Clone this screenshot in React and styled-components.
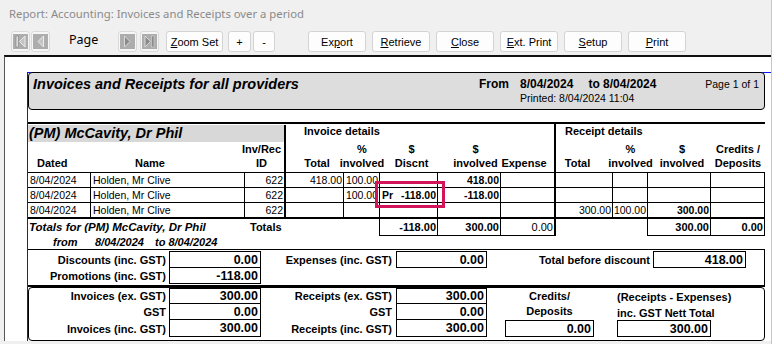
import styled, { createGlobalStyle } from "styled-components";

const COLS = "63px 154px 41px 58px 36px 58px 63px 55px 57px 35px 63px 54px";

const GlobalStyle = createGlobalStyle`
  html, body { margin: 0; padding: 0; background: #f0f0f0; }
  *, *::before, *::after { box-sizing: border-box; }
`;

const Window = styled.div`
  width: 772px;
  height: 344px;
  overflow: hidden;
  background: #f0f0f0;
  border-right: 1px solid #c6c6c6;
  font-family: "Liberation Sans", Arial, sans-serif;
  color: #000;
`;

const TitleBar = styled.div`
  height: 26px;
  padding-left: 9px;
  display: flex;
  align-items: center;
  font-family: "Noto Sans", "Liberation Sans", sans-serif;
  font-size: 11.3px;
  color: #8a8a8a;
  white-space: nowrap;
`;

const Toolbar = styled.div`
  height: 29px;
  padding: 5px 0 0 11px;
  display: flex;
  align-items: flex-start;
`;

const NavButton = styled.div`
  width: 19px;
  height: 21px;
  margin-left: ${(p) => p.$ml || 0}px;
  border: 1px solid #dadada;
  border-radius: 3px;
  background: #f6f6f6;
  display: flex;
  align-items: center;
  justify-content: center;
`;

const PageLabel = styled.div`
  width: 29px;
  margin-left: 19px;
  height: 21px;
  line-height: 18px;
  font-family: "Noto Sans", sans-serif;
  font-size: 12.5px;
  white-space: nowrap;
`;

const ToolButton = styled.button`
  width: ${(p) => p.$w || 58}px;
  height: 21px;
  margin-left: ${(p) => p.$ml || 0}px;
  padding: 0;
  border: 1px solid #d3d3d3;
  border-radius: 3px;
  background: #fdfdfd;
  font-family: "Liberation Sans", Arial, sans-serif;
  font-size: 11px;
  color: #000;
  white-space: nowrap;
`;

const Viewport = styled.div`
  margin-left: 4px;
  height: 286px;
  background: #fff;
  border-top: 2px solid #111;
  border-left: 1px solid #555;
  overflow: hidden;
`;

const Page = styled.div`
  margin: 15px 0 0 22px;
  width: 780px;
  border-left: 1px solid #0a14ff;
  border-top: 1px solid #0a14ff;
`;

const Report = styled.div`
  width: 737px;
`;

const Banner = styled.div`
  position: relative;
  margin-top: -1px;
  height: 38px;
  display: flex;
  padding: 4px 5px 0 4px;
  background: #dddddd;
  border: 1px solid #000;
  border-radius: 4px;
`;

const BannerTitle = styled.div`
  width: 446px;
  font-size: 14.5px;
  font-weight: bold;
  font-style: italic;
  line-height: 14px;
  white-space: nowrap;
`;

const FromLabel = styled.div`
  width: 41px;
  font-size: 12px;
  font-weight: bold;
  line-height: 14px;
`;

const DateBlock = styled.div`
  display: flex;
  flex-direction: column;
`;

const DateLine = styled.div`
  display: flex;
  gap: 15px;
  font-size: 12px;
  font-weight: bold;
  line-height: 14px;
  white-space: nowrap;
`;

const SmallText = styled.div`
  font-size: 10.5px;
  line-height: 14px;
  white-space: nowrap;
  margin-left: ${(p) => (p.$right ? "auto" : "0")};
`;

const ProviderBlock = styled.div`
  margin-top: 12px;
  border-top: 2px solid #000;
`;

const GridRow = styled.div`
  display: grid;
  grid-template-columns: ${COLS};
  height: ${(p) => p.$h}px;
  border-top: ${(p) => p.$top || 0}px solid #000;
`;

const ProviderName = styled.div`
  grid-column: 1 / 4;
  margin-top: 1px;
  padding-left: 1px;
  background: #d8d8d8;
  border-right: 2px solid #000;
  font-size: 14.5px;
  font-weight: bold;
  font-style: italic;
  line-height: 17px;
  white-space: nowrap;
`;

const GroupLabel = styled.div`
  grid-column: ${(p) => p.$span};
  padding-left: ${(p) => p.$pl}px;
  border-right: ${(p) => (p.$thick ? 2 : 0)}px solid #000;
  font-size: 11px;
  font-weight: bold;
  line-height: 14px;
  white-space: nowrap;
`;

const HeadCell = styled.div`
  display: flex;
  flex-direction: column;
  justify-content: flex-end;
  align-items: ${(p) => (p.$left ? "flex-start" : "center")};
  padding: 0 ${(p) => p.$pr || 0}px 2px ${(p) => p.$pl || 0}px;
  border-right: ${(p) => (p.$thick ? 2 : 0)}px solid #000;
  font-size: 11px;
  font-weight: bold;
  line-height: 14px;
  white-space: nowrap;
`;

const DataCell = styled.div`
  position: relative;
  display: flex;
  justify-content: ${(p) => (p.$split ? "space-between" : p.$left ? "flex-start" : "flex-end")};
  padding: 0 1px 0 ${(p) => (p.$left || p.$split ? 2 : 1)}px;
  border-right: ${(p) => (p.$thick ? 2 : 1)}px solid #000;
  font-size: 10.5px;
  font-weight: ${(p) => (p.$bold ? "bold" : "normal")};
  line-height: 14px;
  white-space: nowrap;
`;

const Highlight = styled.div`
  position: absolute;
  left: -5px;
  top: -7px;
  width: 70px;
  height: 27px;
  border: 3px solid #d4145a;
  z-index: 3;
  pointer-events: none;
`;

const TotalCell = styled.div`
  grid-column: ${(p) => p.$span || "auto"};
  display: flex;
  justify-content: flex-end;
  padding: 0 1px 0 ${(p) => p.$pl || 0}px;
  border-right: ${(p) => p.$edge || 0}px solid #000;
  border-bottom: ${(p) => (p.$boxed ? 1 : 0)}px solid #000;
  font-size: 11px;
  font-weight: ${(p) => (p.$regular ? "normal" : "bold")};
  line-height: 16px;
  white-space: nowrap;
`;

const TotalsTitle = styled.div`
  grid-column: 1 / 3;
  padding-left: 1px;
  font-size: 11.5px;
  font-weight: bold;
  font-style: italic;
  line-height: 16px;
  white-space: nowrap;
`;

const TotalsWord = styled.div`
  padding-left: 5px;
  font-size: 11px;
  font-weight: bold;
  line-height: 16px;
`;

const FromRow = styled.div`
  height: 13px;
  display: flex;
  padding-left: 25px;
  font-size: 11px;
  font-weight: bold;
  font-style: italic;
  line-height: 13px;
  white-space: nowrap;
`;

const FromPart = styled.span`
  width: ${(p) => (p.$w ? `${p.$w}px` : "auto")};
`;

const SummaryTop = styled.div`
  display: grid;
  grid-template-columns: 141px 92px 135px 91px 166px 93px;
  grid-template-rows: 17px 16px;
  height: 38px;
  padding-top: 1px;
  border-top: 1px solid #000;
  border-right: 1px solid #000;
  border-bottom: 2px solid #000;
`;

const SummaryBottom = styled.div`
  display: grid;
  grid-template-columns: 140px 92px 135px 91px 18px 89px 23px 94px;
  grid-template-rows: 16px 16px 17px;
  height: 54px;
  border: 1px solid #000;
  border-radius: 4px;
`;

const SumLabel = styled.div`
  grid-column: ${(p) => p.$col || "auto"};
  grid-row: ${(p) => p.$row || "auto"};
  display: flex;
  align-items: center;
  justify-content: flex-end;
  padding-right: ${(p) => p.$pr || 3}px;
  font-size: 11px;
  font-weight: bold;
  white-space: nowrap;
`;

const SumValue = styled.div`
  grid-column: ${(p) => p.$col || "auto"};
  grid-row: ${(p) => p.$row || "auto"};
  display: flex;
  align-items: center;
  justify-content: flex-end;
  padding-right: 2px;
  border: 1px solid #000;
  border-top-width: ${(p) => (p.$stacked ? 0 : 1)}px;
  font-size: 12.5px;
  font-weight: bold;
  white-space: nowrap;
`;

const NoteLabel = styled.div`
  grid-column: ${(p) => p.$col};
  grid-row: 1 / 3;
  display: flex;
  flex-direction: column;
  align-items: ${(p) => (p.$left ? "flex-start" : "center")};
  padding-top: 1px;
  font-size: 11px;
  font-weight: bold;
  line-height: ${(p) => (p.$left ? 16 : 15)}px;
  white-space: nowrap;
`;

const NavIcon = ({ dir, end }) => (
  <svg width="15" height="15" viewBox="0 0 15 15">
    <rect width="15" height="15" fill="#adadad" />
    {dir === "left" ? (
      <>
        {end && <rect x="3" y="2" width="2.5" height="11" fill="#dcdcdc" stroke="#7f7f7f" strokeWidth="0.6" />}
        <path d={end ? "M12 2 L6.5 7.5 L12 13 Z" : "M10.5 2 L5 7.5 L10.5 13 Z"} fill="#c4c4c4" stroke="#ececec" strokeWidth="1" />
      </>
    ) : (
      <>
        <path d={end ? "M3 2 L8.5 7.5 L3 13 Z" : "M4.5 2 L10 7.5 L4.5 13 Z"} fill="#8a8a8a" stroke="#d8d8d8" strokeWidth="1" />
        {end && <rect x="9.5" y="2" width="2.5" height="11" fill="#8a8a8a" stroke="#d8d8d8" strokeWidth="0.6" />}
      </>
    )}
  </svg>
);

const heads = [
  { b: "Dated", left: true, pl: 9 },
  { b: "Name", left: true, pl: 44 },
  { a: "Inv/Rec", b: "ID", pr: 6, thick: true },
  { b: "Total", pl: 4 },
  { a: "%", b: "involved" },
  { a: "$", b: "Discnt", pl: 5 },
  { a: "$", b: "involved", pl: 12 },
  { b: "Expense", pr: 7, thick: true },
  { b: "Total", pr: 14 },
  { a: "%", b: "involved" },
  { a: "$", b: "involved", pl: 5 },
  { a: "Credits /", b: "Deposits" },
];

const rows = [
  { total: "418.00", pct: "100.00", disc: "", inv: "418.00", rtotal: "", rpct: "", rinv: "" },
  { total: "", pct: "100.00", disc: "-118.00", inv: "-118.00", rtotal: "", rpct: "", rinv: "", promo: true },
  { total: "", pct: "", disc: "", inv: "", rtotal: "300.00", rpct: "100.00", rinv: "300.00" },
];

export default function App() {
  return (
    <Window>
      <GlobalStyle />
      <TitleBar>Report: Accounting: Invoices and Receipts over a period</TitleBar>
      <Toolbar>
        <NavButton><NavIcon dir="left" end /></NavButton>
        <NavButton $ml={1}><NavIcon dir="left" /></NavButton>
        <PageLabel>Page</PageLabel>
        <NavButton $ml={20}><NavIcon dir="right" /></NavButton>
        <NavButton $ml={3}><NavIcon dir="right" end /></NavButton>
        <ToolButton $w={57} $ml={7}><u>Z</u>oom Set</ToolButton>
        <ToolButton $w={23} $ml={5}>+</ToolButton>
        <ToolButton $w={22} $ml={2}>-</ToolButton>
        <ToolButton $ml={33}>Ex<u>p</u>ort</ToolButton>
        <ToolButton $ml={6}><u>R</u>etrieve</ToolButton>
        <ToolButton $ml={6}><u>C</u>lose</ToolButton>
        <ToolButton $ml={6}><u>E</u>xt. Print</ToolButton>
        <ToolButton $ml={6}><u>S</u>etup</ToolButton>
        <ToolButton $ml={6}><u>P</u>rint</ToolButton>
      </Toolbar>
      <Viewport>
        <Page>
          <Report>
            <Banner>
              <BannerTitle>Invoices and Receipts for all providers</BannerTitle>
              <FromLabel>From</FromLabel>
              <DateBlock>
                <DateLine>
                  <span>8/04/2024</span>
                  <span>to 8/04/2024</span>
                </DateLine>
                <SmallText>Printed: 8/04/2024 11:04</SmallText>
              </DateBlock>
              <SmallText $right>Page 1 of 1</SmallText>
            </Banner>

            <ProviderBlock>
              <GridRow $h={18}>
                <ProviderName>(PM) McCavity, Dr Phil</ProviderName>
                <GroupLabel $span="4 / 9" $pl={18} $thick>Invoice details</GroupLabel>
                <GroupLabel $span="9 / 13" $pl={9}>Receipt details</GroupLabel>
              </GridRow>
              <GridRow $h={30}>
                {heads.map((h, i) => (
                  <HeadCell key={i} $left={h.left} $pl={h.pl} $pr={h.pr} $thick={h.thick}>
                    <span>{h.a || "\u00a0"}</span>
                    <span>{h.b}</span>
                  </HeadCell>
                ))}
              </GridRow>
              {rows.map((r, i) => (
                <GridRow key={i} $h={15} $top={1}>
                  <DataCell $left>8/04/2024</DataCell>
                  <DataCell $left>Holden, Mr Clive</DataCell>
                  <DataCell $thick>622</DataCell>
                  <DataCell>{r.total}</DataCell>
                  <DataCell>{r.pct}</DataCell>
                  {r.promo ? (
                    <DataCell $split $bold>
                      <span>Pr</span>
                      <span>{r.disc}</span>
                      <Highlight />
                    </DataCell>
                  ) : (
                    <DataCell $bold>{r.disc}</DataCell>
                  )}
                  <DataCell $bold>{r.inv}</DataCell>
                  <DataCell $thick />
                  <DataCell>{r.rtotal}</DataCell>
                  <DataCell>{r.rpct}</DataCell>
                  <DataCell $bold>{r.rinv}</DataCell>
                  <DataCell />
                </GridRow>
              ))}
              <GridRow $h={19} $top={2}>
                <TotalsTitle>Totals for (PM) McCavity, Dr Phil</TotalsTitle>
                <TotalsWord>Totals</TotalsWord>
                <TotalCell />
                <TotalCell $edge={1} />
                <TotalCell $edge={1} $boxed>-118.00</TotalCell>
                <TotalCell $edge={1} $boxed>300.00</TotalCell>
                <TotalCell $edge={2} $boxed $regular>0.00</TotalCell>
                <TotalCell />
                <TotalCell $edge={1} />
                <TotalCell $edge={1} $boxed>300.00</TotalCell>
                <TotalCell $edge={1} $boxed>0.00</TotalCell>
              </GridRow>
              <FromRow>
                <FromPart $w={42}>from</FromPart>
                <FromPart $w={60}>8/04/2024</FromPart>
                <FromPart>to 8/04/2024</FromPart>
              </FromRow>
            </ProviderBlock>

            <SummaryTop>
              <SumLabel>Discounts (inc. GST)</SumLabel>
              <SumValue>0.00</SumValue>
              <SumLabel $pr={4}>Expenses (inc. GST)</SumLabel>
              <SumValue>0.00</SumValue>
              <SumLabel>Total before discount</SumLabel>
              <SumValue>418.00</SumValue>
              <SumLabel>Promotions (inc. GST)</SumLabel>
              <SumValue $stacked>-118.00</SumValue>
            </SummaryTop>

            <SummaryBottom>
              <SumLabel $col={1} $row={1}>Invoices (ex. GST)</SumLabel>
              <SumValue $col={2} $row={1}>300.00</SumValue>
              <SumLabel $col={3} $row={1} $pr={4}>Receipts (ex. GST)</SumLabel>
              <SumValue $col={4} $row={1}>300.00</SumValue>
              <NoteLabel $col={6}>
                <span>Credits/</span>
                <span>Deposits</span>
              </NoteLabel>
              <NoteLabel $col={8} $left>
                <span>(Receipts - Expenses)</span>
                <span>inc. GST Nett Total</span>
              </NoteLabel>

              <SumLabel $col={1} $row={2}>GST</SumLabel>
              <SumValue $col={2} $row={2} $stacked>0.00</SumValue>
              <SumLabel $col={3} $row={2} $pr={4}>GST</SumLabel>
              <SumValue $col={4} $row={2} $stacked>0.00</SumValue>

              <SumLabel $col={1} $row={3}>Invoices (inc. GST)</SumLabel>
              <SumValue $col={2} $row={3} $stacked>300.00</SumValue>
              <SumLabel $col={3} $row={3} $pr={4}>Receipts (inc. GST)</SumLabel>
              <SumValue $col={4} $row={3} $stacked>300.00</SumValue>
              <SumValue $col={6} $row={3}>0.00</SumValue>
              <SumValue $col={8} $row={3}>300.00</SumValue>
            </SummaryBottom>
          </Report>
        </Page>
      </Viewport>
    </Window>
  );
}
